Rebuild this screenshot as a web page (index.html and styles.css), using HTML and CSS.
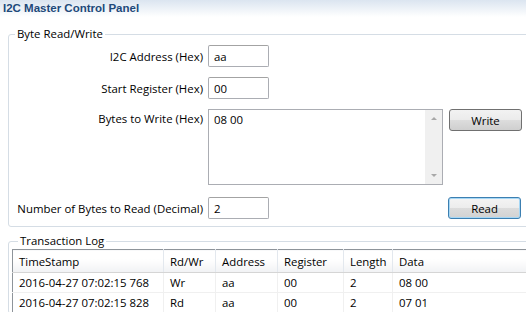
FILE: index.html
```html
<!DOCTYPE html>
<html lang="en">
<head>
	<meta charset="UTF-8">
	<title>I2C Master Control Panel</title>
	<link rel="stylesheet" href="styles.css">
</head>
<body>
	<div class="title_bar">I2C Master Control Panel</div>

	<div class="view">
		<fieldset class="group rw_group">
			<legend>Byte Read/Write</legend>
			<div class="form">
				<label class="lbl">I2C Address (Hex)</label>
				<div class="field"><input class="txt" type="text" value="aa"></div>

				<label class="lbl">Start Register (Hex)</label>
				<div class="field"><input class="txt" type="text" value="00"></div>

				<label class="lbl lbl_top">Bytes to Write (Hex)</label>
				<div class="field">
					<div class="memo">
						<div class="memo_text">08 00</div>
						<div class="vscroll">
							<span class="arrow up"></span>
							<span class="arrow down"></span>
						</div>
					</div>
					<button class="btn">Write</button>
				</div>

				<label class="lbl">Number of Bytes to Read (Decimal)</label>
				<div class="field">
					<input class="txt" type="text" value="2">
					<button class="btn btn_default">Read</button>
				</div>
			</div>
		</fieldset>

		<fieldset class="group log_group">
			<legend>Transaction Log</legend>
			<table class="log">
				<thead>
					<tr>
						<th class="c_time">TimeStamp</th>
						<th class="c_rw">Rd/Wr</th>
						<th class="c_addr">Address</th>
						<th class="c_reg">Register</th>
						<th class="c_len">Length</th>
						<th class="c_data">Data</th>
					</tr>
				</thead>
				<tbody>
					<tr>
						<td>2016-04-27 07:02:15 768</td>
						<td>Wr</td>
						<td>aa</td>
						<td>00</td>
						<td>2</td>
						<td>08 00</td>
					</tr>
					<tr>
						<td>2016-04-27 07:02:15 828</td>
						<td>Rd</td>
						<td>aa</td>
						<td>00</td>
						<td>2</td>
						<td>07 01</td>
					</tr>
				</tbody>
			</table>
		</fieldset>
	</div>
</body>
</html>
```

FILE: styles.css
```css
body{
	margin:0;
	padding:0;
	width:526px;
	height:312px;
	overflow:hidden;
	background-color:#fff;
	font-family:"Open Sans","Noto Sans",sans-serif;
	font-size:11.4px;
	color:#000;
}

.title_bar{
	height:17px;
	line-height:16px;
	padding-left:3px;
	font-family:"Liberation Sans",Arial,sans-serif;
	font-weight:bold;
	font-size:11.5px;
	color:#21497a;
	background:linear-gradient(#dbe5f0,#fff);
}

/* 右侧边框在视图外, 裁掉 */
.view{
	overflow:hidden;
	height:295px;
}

.group{
	border:1px solid #d5dde5;
	border-radius:3px;
	margin:0 -30px 0 8px;
	padding:0;
	min-width:0;
}

.group legend{
	padding:0 2px;
	margin-left:6px;
	line-height:16px;
}

.rw_group{
	margin-top:9px;
	padding:3px 0 7px 0;
}

.form{
	display:grid;
	grid-template-columns:194px 1fr;
	column-gap:5px;
	row-gap:10px;
}

.lbl{
	text-align:right;
	align-self:center;
}

.lbl_top{
	align-self:start;
	padding-top:2px;
}

.field{
	display:flex;
	align-items:flex-start;
}

.txt{
	width:61px;
	height:22px;
	box-sizing:border-box;
	border:1px solid #abadb3;
	border-top-color:#a3a3a3;
	border-radius:2px;
	padding:0 5px;
	font:inherit;
	margin:0;
}

.memo{
	width:235px;
	height:76px;
	box-sizing:border-box;
	border:1px solid #abadb3;
	display:flex;
	margin-bottom:2px;
}

.memo_text{
	flex:1;
	padding:2px 5px;
}

.vscroll{
	width:17px;
	background-color:#f0f0f0;
	display:flex;
	flex-direction:column;
	justify-content:space-between;
	align-items:center;
	padding:7px 0;
}

.arrow{
	width:0;
	height:0;
	border-left:3px solid transparent;
	border-right:3px solid transparent;
}

.up{
	border-bottom:3px solid #a8a8a8;
}

.down{
	border-top:3px solid #a8a8a8;
}

.btn{
	width:73px;
	height:22px;
	margin-left:6px;
	border:1px solid #707070;
	border-radius:3px;
	background:linear-gradient(#f2f2f2 0,#ebebeb 50%,#dddddd 51%,#cfcfcf 100%);
	font:inherit;
	color:#000;
	padding:0;
	cursor:pointer;
}

.txt + .btn{
	margin-left:179px;
}

.btn_default{
	border-color:#3c7fb1;
	box-shadow:inset 0 0 0 1px #a6d7f5;
	background:linear-gradient(#f4f4f4 0,#ececec 50%,#dcdcdc 51%,#d2d2d2 100%);
}

.log_group{
	margin-top:6px;
	padding:0 0 0 3px;
}

.log{
	border-collapse:collapse;
	border-top:1px solid #8e949a;
	border-left:1px solid #8e949a;
	width:540px;
	table-layout:fixed;
}

.log th{
	height:22px;
	font-weight:normal;
	text-align:left;
	padding:0 6px;
	background:linear-gradient(#fff 0,#fff 40%,#f1f2f4 100%);
	border-right:1px solid #e3e8ee;
	border-bottom:1px solid #d5d5d5;
}

.log td{
	height:19px;
	padding:0 6px;
	border-right:1px solid #f0f0f0;
	border-bottom:1px solid #f0f0f0;
	white-space:nowrap;
}

.c_time{ width:138px; }
.c_rw{ width:39px; }
.c_addr{ width:49px; }
.c_reg{ width:53px; }
.c_len{ width:36px; }
```
